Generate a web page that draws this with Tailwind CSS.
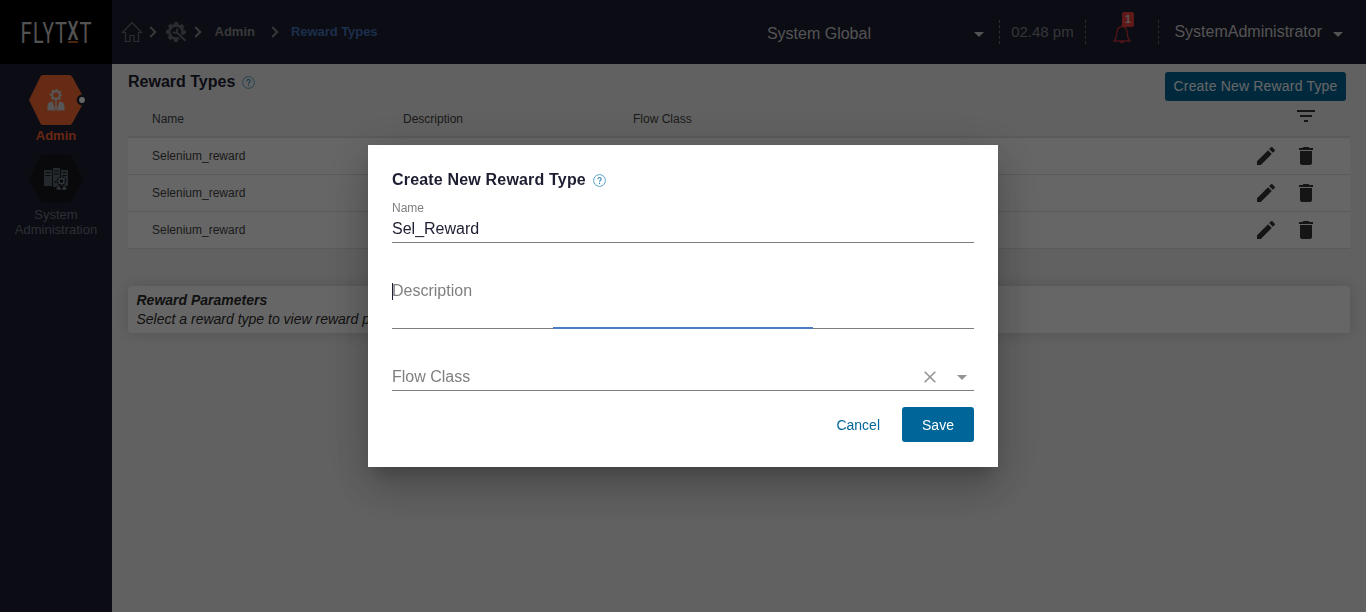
<!DOCTYPE html>
<html lang="en">
<head>
<meta charset="utf-8">
<title>Reward Types</title>
<script src="https://cdn.jsdelivr.net/npm/@tailwindcss/browser@4"></script>
</head>
<body class="h-[612px] w-[1366px] overflow-hidden bg-[#f3f3f3] font-['Liberation_Sans',Arial,sans-serif] text-[#1e1e32]">
<svg class="hidden">
  <symbol id="chev" viewBox="0 0 8 12"><path d="M1.200 1l5 5-5 5" fill="none" stroke="#8c8c8c" stroke-width="2"/></symbol>
  <symbol id="help" viewBox="0 0 13 13"><circle cx="6.500" cy="6.500" r="5.900" fill="none" stroke="#5ba4cb" stroke-width="1"/><path d="M4.900 5.200c0-2.300 3.300-2.200 3.300-.1C8.200 6.300 6.500 6.400 6.500 7.800M6.500 8.800v1.200" fill="none" stroke="#2f87b8" stroke-width="1.100"/></symbol>
  <symbol id="pen" viewBox="0 0 24 24"><path d="M3 17.250V21h3.750L17.810 9.940l-3.750-3.750L3 17.250zM20.710 7.040a1 1 0 0 0 0-1.410l-2.340-2.340a1 1 0 0 0-1.410 0l-1.830 1.830 3.750 3.750 1.830-1.830z" fill="#363636"/></symbol>
  <symbol id="bin" viewBox="0 0 24 24"><path d="M6 19c0 1.100.9 2 2 2h8c1.100 0 2-.9 2-2V7H6v12zM19 4h-3.500l-1-1h-5l-1 1H5v2h14V4z" fill="#363636"/></symbol>
  <symbol id="gear" viewBox="0 0 20 20"><circle cx="10" cy="10" r="6.300" fill="none" stroke="currentColor" stroke-width="3.400"/><circle cx="10" cy="10" r="8.600" fill="none" stroke="currentColor" stroke-width="2.700" stroke-dasharray="3.900 2.854" stroke-dashoffset="1.950"/></symbol>
</svg>

<div class="flex h-full">
  <aside class="flex w-28 shrink-0 flex-col bg-[#1e1f33]">
    <div class="flex h-16 items-center justify-center bg-black">
      <svg class="h-16 w-28" viewBox="0 0 112 64" font-family="Roboto, sans-serif" font-size="29" fill="#d0d0d0">
        <text x="20.500" y="43" textLength="11.500" lengthAdjust="spacingAndGlyphs">F</text>
        <text x="33" y="43" textLength="10.500" lengthAdjust="spacingAndGlyphs">L</text>
        <text x="42.500" y="43" textLength="11.500" lengthAdjust="spacingAndGlyphs">Y</text>
        <text x="55" y="43" textLength="12" lengthAdjust="spacingAndGlyphs">T</text>
        <text x="67.500" y="40" font-size="25" font-weight="500" textLength="11" lengthAdjust="spacingAndGlyphs">X</text>
        <text x="79.500" y="43" textLength="12" lengthAdjust="spacingAndGlyphs">T</text>
        <rect x="68" y="41" width="10" height="2" fill="#b85a24"/>
      </svg>
    </div>
    <nav class="flex flex-col items-center pt-[11px] text-center text-[13px] leading-[15px]">
      <a class="flex flex-col items-center font-bold text-[#ff6230]">
        <svg class="h-[50px] w-[60px]" viewBox="0 0 60 50">
          <path d="M17 0h26.500a3 3 0 0 1 2.600 1.500L59 25 46.100 48.500a3 3 0 0 1-2.600 1.500H17a3 3 0 0 1-2.600-1.500L3 25 14.400 1.500A3 3 0 0 1 17 0z" fill="#ff6c36"/>
          <circle cx="56" cy="25" r="5.400" fill="#1e1f33"/><path d="M57 18.500h3v13h-3z" fill="#1e1f33"/><circle cx="56" cy="25" r="2.900" fill="#fff"/>
          <svg x="24" y="14" width="12" height="12" viewBox="0 0 20 20" color="#d8d8d8"><use href="#gear"/></svg>
          <path d="M21.500 35.500V31c0-3 2.300-4.300 5-4.800l2.800 9.300zM38.500 35.500V31c0-3-2.300-4.300-5-4.800l-2.800 9.300zM28.700 26.500h2.600l-.8 2 .6 4-1.100 3-1.100-3 .6-4z" fill="#d8d8d8"/>
        </svg>
        <span class="mt-[3px]">Admin</span>
      </a>
      <a class="mt-3 flex flex-col items-center text-[#6c7680]">
        <svg class="h-12 w-[60px]" viewBox="0 0 60 48">
          <path d="M17 0h26q2 0 3 2l11 22-11 22q-1 2-3 2H17q-2 0-3-2L3 24 14 2q1-2 3-2z" fill="#17181f"/>
          <g fill="#5a6873"><path d="M18 15h8v16h-8zM27 13h7v19h-7zM35 15h7v16h-7z"/></g>
          <path d="M19.500 17.500h5M19.500 20.500h5M28 16h5M28 19h5M36.500 17.500h4M36.500 20.500h4" stroke="#17181f" stroke-width="1"/>
          <circle cx="29.500" cy="27" r="1" fill="#17181f"/>
          <circle cx="35.500" cy="26" r="4.600" fill="#17181f"/>
          <svg x="31.500" y="22" width="8" height="8" viewBox="0 0 20 20" color="#78868f"><use href="#gear"/></svg>
          <path d="M30 35q0-4 3.500-4.600l2 4.200 2-4.200q3.500.6 3.500 4.600z" fill="#78868f" stroke="#17181f" stroke-width=".8"/>
        </svg>
        <span class="mt-1">System<br>Administration</span>
      </a>
    </nav>
  </aside>

  <div class="flex min-w-0 flex-1 flex-col">
    <header class="flex h-16 shrink-0 items-center bg-[#1e1f33]">
      <div class="flex h-full items-center pl-[9px] text-[13px] font-bold">
        <svg class="h-[22px] w-[22px]" viewBox="0 0 22 22"><path d="M1.500 11.500L11 1.500l9.500 10h-3V20.500h-4.500v-6h-4v6H4.500v-9z" fill="none" stroke="#6f717d" stroke-width="1.200"/></svg>
        <svg class="ml-[6px] h-3 w-2"><use href="#chev"/></svg>
        <svg class="ml-[9px] h-5 w-[21px] text-[#6c6e79]" viewBox="0 0 21 20">
          <use href="#gear" width="20" height="20"/>
          <circle cx="10" cy="10" r="5.300" fill="#1e1f33"/>
          <path d="M12 12l8 7.500" stroke="#1e1f33" stroke-width="4.500"/>
          <path d="M10.500 6.500a2.400 2.400 0 1 1-3.500 3.200M10 9.700l9.500 9" fill="none" stroke="#6c6e79" stroke-width="2"/>
        </svg>
        <svg class="ml-[7px] h-3 w-2"><use href="#chev"/></svg>
        <span class="ml-[12.500px] text-[#8f8f8f]">Admin</span>
        <svg class="ml-4 h-3 w-2"><use href="#chev"/></svg>
        <span class="ml-3 tracking-[-0.05px] text-[#4474bb]">Reward Types</span>
      </div>
      <div class="ml-auto flex h-full items-center pr-[23px] text-base text-[#cfcfcf]">
        <span class="-ml-px w-[207px] pt-[3px]">System Global</span>
        <svg class="mt-1 h-[5px] w-[10px]"><path d="M0 0h10l-5 5z" fill="#d0d0d0"/></svg>
        <span class="ml-[15px] flex h-6 w-[87px] items-center justify-center border-x border-dashed border-[#707070] text-[15px] text-[#85868c]">02.48 pm</span>
        <div class="relative flex w-[72px] justify-center">
          <svg class="mt-1 h-5 w-[18px]" viewBox="0 0 18 20"><path d="M1 17h16c-2-1.500-2.300-3-2.500-6C14.300 6 13.300 2.500 9 2.500S3.700 6 3.500 11C3.300 14 3 15.500 1 17zM7.500 17.500q1.500 2 3 0M9 2.500V.8" fill="none" stroke="#c43438" stroke-width="1.300"/></svg>
          <span class="absolute -top-[8px] left-[36px] flex h-[15px] w-[12px] items-center justify-center rounded-[2px] bg-[#f04040] text-[10px] font-bold text-[#ddd]">1</span>
        </div>
        <span class="flex h-6 items-center border-l border-dashed border-[#707070] pl-[15.500px]">SystemAdministrator</span>
        <svg class="ml-[11px] mt-1 h-[5px] w-[10px]"><path d="M0 0h10l-5 5z" fill="#d0d0d0"/></svg>
      </div>
    </header>

    <main class="flex flex-1 flex-col px-4">
      <div class="flex h-[37px] justify-between pt-2">
        <h1 class="flex h-5 items-center gap-[7px] text-base font-bold">Reward Types<svg class="mt-px h-[13px] w-[13px]"><use href="#help"/></svg></h1>
        <button class="mr-1 h-[29px] w-[181px] rounded-[3px] bg-[#006699] pb-px text-sm tracking-[0.18px] text-white">Create New Reward Type</button>
      </div>
      <table class="w-full table-fixed border-collapse text-left text-xs text-[#444]">
        <colgroup><col class="w-[251px]"><col class="w-[230px]"><col><col class="w-[126px]"></colgroup>
        <thead>
          <tr class="h-[36px] border-b-2 border-[#e2e2e2]">
            <th class="pl-6 font-normal">Name</th><th class="pl-6 font-normal">Description</th><th class="pl-6 font-normal">Flow Class</th>
            <th><svg class="-mt-[6px] ml-[73px] h-3 w-[18px]"><path d="M0 0h18v2H0zM3 5h12v2H3zM7 10h4v2H7z" fill="#363636"/></svg></th>
          </tr>
        </thead>
        <tbody>
          <tr class="h-[37px] border-b border-[#e2e2e2] bg-white">
            <td class="pl-6">Selenium_reward</td><td></td><td></td>
            <td><div class="flex gap-4 pl-[30px]"><svg class="h-6 w-6"><use href="#pen"/></svg><svg class="h-6 w-6"><use href="#bin"/></svg></div></td>
          </tr>
          <tr class="h-[37px] border-b border-[#e2e2e2] bg-white">
            <td class="pl-6">Selenium_reward</td><td></td><td></td>
            <td><div class="flex gap-4 pl-[30px]"><svg class="h-6 w-6"><use href="#pen"/></svg><svg class="h-6 w-6"><use href="#bin"/></svg></div></td>
          </tr>
          <tr class="h-[37px] border-b border-[#e2e2e2] bg-white">
            <td class="pl-6">Selenium_reward</td><td></td><td></td>
            <td><div class="flex gap-4 pl-[30px]"><svg class="h-6 w-6"><use href="#pen"/></svg><svg class="h-6 w-6"><use href="#bin"/></svg></div></td>
          </tr>
        </tbody>
      </table>
      <section class="mt-[37px] h-[47px] rounded-[4px] bg-white pl-[8.500px] pt-[5px] text-sm italic leading-[19px] text-[#2c2c2c] shadow-[0_0_16px_rgba(0,0,0,0.15)]">
        <h2 class="font-bold">Reward Parameters</h2>
        <p>Select a reward type to view reward parameters</p>
      </section>
    </main>
  </div>
</div>

<div class="fixed inset-0 flex items-start justify-center bg-black/60 pt-[145px]">
  <form class="flex h-[322px] w-[630px] flex-col bg-white px-6 pt-6 shadow-[0_11px_15px_-7px_rgba(0,0,0,0.2),0_24px_38px_3px_rgba(0,0,0,0.14),0_9px_46px_8px_rgba(0,0,0,0.12)]">
    <h2 class="flex h-[22px] items-center gap-[7px] text-base font-bold tracking-[0.18px]">Create New Reward Type<svg class="mt-px h-[13px] w-[13px]"><use href="#help"/></svg></h2>
    <div class="mt-[9px] flex h-[43px] flex-col border-b border-[#7d7d7d] pt-px">
      <label class="text-xs leading-[14px] text-[#7f7f7f]">Name</label>
      <span class="mt-1 text-base leading-[20px]">Sel_Reward</span>
    </div>
    <div class="relative mt-[38px] h-[48px] border-b border-[#7d7d7d] text-base leading-[20px] text-[#7f7f7f]">
      Description
      <span class="absolute left-0 top-[2px] h-[17px] w-px bg-[#1e1e32]"></span>
      <span class="absolute -bottom-px left-[161px] h-[2px] w-[260px] bg-[#4c7cc8]"></span>
    </div>
    <div class="mt-[37px] flex h-[25px] border-b border-[#7d7d7d] text-base leading-[20px] text-[#7f7f7f]">
      <span class="flex-1 pt-px">Flow Class</span>
      <svg class="mt-[5px] h-3 w-3"><path d="M.7.7l10.600 10.600M11.300.7L.7 11.300" stroke="#949494" stroke-width="1.600"/></svg>
      <svg class="ml-[21px] mr-[7px] mt-[9px] h-[5px] w-[10px]"><path d="M0 0h10l-5 5z" fill="#949494"/></svg>
    </div>
    <div class="mt-4 flex items-center justify-end text-sm">
      <button type="button" class="mr-[22px] text-[#006699]">Cancel</button>
      <button type="button" class="h-[35px] w-[72px] rounded-[3px] bg-[#006699] text-white">Save</button>
    </div>
  </form>
</div>
</body>
</html>
